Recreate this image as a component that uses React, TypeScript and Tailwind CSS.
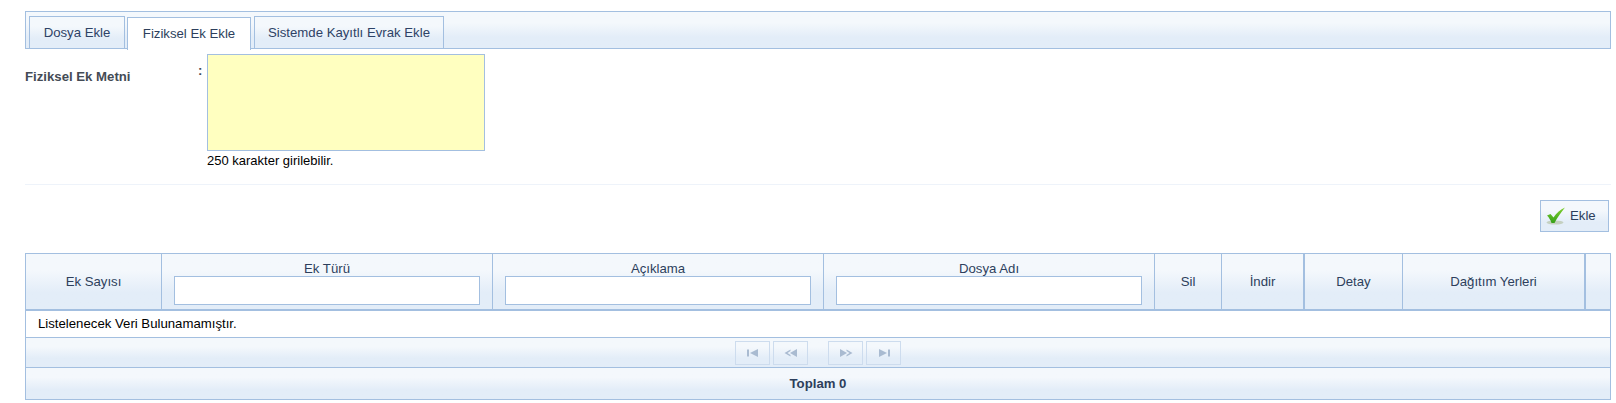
import React from "react";

const bar = "bg-gradient-to-b from-[#f4f8fc] from-30% to-[#e3edf8] to-70%";
const font = "font-['Liberation_Sans',Arial,sans-serif]";

function Tab({ label, active, className }: { label: string; active?: boolean; className: string }) {
    if (active) {
        return (
            <div className={`h-[33px] -mb-px mt-[5px] flex items-center justify-center border border-b-0 border-[#a3bfe0] bg-white text-[#2d3f5c] ${className}`}>
                {label}
            </div>
        );
    }
    return (
        <div className={`h-[32px] mt-[4px] flex items-center justify-center border border-b-0 border-[#a3bfe0] text-[#2d4266] ${className} ${bar}`}>
            {label}
        </div>
    );
}

function HeadCell({ label, filter, className }: { label: string; filter?: boolean; className: string }) {
    return (
        <div className={`flex flex-col items-center text-[#2d3f5c] ${filter ? "justify-end pb-[4px]" : "justify-center"} ${className}`}>
            {filter ? (
                <>
                    <div className="h-[17px] leading-[19px]">{label}</div>
                    <input className="w-[306px] h-[29px] border border-[#a3bfe0] bg-white" />
                </>
            ) : (
                label
            )}
        </div>
    );
}

function PagerBtn({ kind }: { kind: "first" | "prev" | "next" | "last" }) {
    return (
        <button className="w-[35px] h-[24px] border border-[#cddcee] flex items-center justify-center">
            <svg width="20" height="10" viewBox="0 0 20 10" fill="#a9bbd1">
                {kind === "first" && (
                    <>
                        <rect x="4" y="1.5" width="2" height="7" />
                        <path d="M15 1v8L7 5z" />
                    </>
                )}
                {kind === "prev" && (
                    <>
                        <path d="M9.500 1.500L3.500 5l6 3.500V7L6.500 5l3-2z" />
                        <path d="M16 1v8L9 5z" />
                    </>
                )}
                {kind === "next" && (
                    <>
                        <path d="M4 1v8L11 5z" />
                        <path d="M10.500 1.500l6 3.500-6 3.500V7l3-2-3-2z" />
                    </>
                )}
                {kind === "last" && (
                    <>
                        <path d="M5 1v8L13 5z" />
                        <rect x="14" y="1.5" width="2" height="7" />
                    </>
                )}
            </svg>
        </button>
    );
}

export default function App() {
    return (
        <div className={`w-[1616px] h-[403px] bg-white pt-[11px] pl-[25px] pr-[5px] text-[13.2px] overflow-hidden ${font}`}>
            {/* tabs */}
            <div className={`h-[38px] border border-[#a3bfe0] flex pl-[3px] ${bar}`}>
                <Tab label="Dosya Ekle" className="w-[96px]" />
                <Tab label="Fiziksel Ek Ekle" active className="w-[124px] ml-[2px]" />
                <Tab label="Sistemde Kayıtlı Evrak Ekle" className="w-[190px] ml-[3px]" />
            </div>

            {/* form */}
            <div className="flex mt-[5px]">
                <div className="w-[173px] pt-[14px] font-bold text-[#444b55] leading-[17px]">Fiziksel Ek Metni</div>
                <div className="w-[9px] pt-[8px] font-bold text-[#444b55] leading-[17px]">:</div>
                <div>
                    <div className="w-[278px] h-[97px] border border-[#a3bfe0] bg-[#ffffc0]" />
                    <div className="text-[13px] leading-[16px] mt-[2px] text-black">250 karakter girilebilir.</div>
                </div>
            </div>

            <div className="h-px bg-[#eef3fa] mt-[15px]" />

            <div className="flex justify-end pr-[2px] mt-[15px]">
                <button className={`w-[69px] h-[32px] border border-[#a3bfe0] flex items-center pl-[5px] gap-[4px] text-[#2d3f5c] ${bar}`}>
                    <svg width="20" height="18" viewBox="0 0 20 18">
                        <defs>
                            <linearGradient id="chk" x1="0" y1="0" x2="0" y2="1">
                                <stop offset="0" stopColor="#7fd02e" />
                                <stop offset="1" stopColor="#35a018" />
                            </linearGradient>
                        </defs>
                        <ellipse cx="9" cy="15.500" rx="8.500" ry="2" fill="#c4d0c0" />
                        <path d="M1 8.500l3.500-1.500 3 3.500C10.500 6 14.500 2.500 19 .5 15 5.500 11.500 10 8.500 16H5.500C4.500 13 3 10.500 1 8.500z" fill="url(#chk)" />
                    </svg>
                    Ekle
                </button>
            </div>

            {/* grid */}
            <div className="border border-[#a3bfe0] mt-[21px]">
                <div className={`h-[57px] flex border-b-2 border-[#a3bfe0] ${bar}`}>
                    <HeadCell label="Ek Sayısı" className="w-[136px] border-r border-[#a3bfe0]" />
                    <HeadCell label="Ek Türü" filter className="w-[331px] border-r border-[#a3bfe0]" />
                    <HeadCell label="Açıklama" filter className="w-[331px] border-r border-[#a3bfe0]" />
                    <HeadCell label="Dosya Adı" filter className="w-[331px] border-r border-[#a3bfe0]" />
                    <HeadCell label="Sil" className="w-[67px] border-r border-[#a3bfe0]" />
                    <HeadCell label="İndir" className="w-[83px] border-r-2 border-[#a3bfe0]" />
                    <HeadCell label="Detay" className="w-[98px] border-r border-[#a3bfe0]" />
                    <HeadCell label="Dağıtım Yerleri" className="w-[183px] border-r-2 border-[#a3bfe0]" />
                    <div className="flex-1" />
                </div>
                <div className="h-[27px] border-b border-[#a3bfe0] pl-[12px] flex items-center text-black">
                    Listelenecek Veri Bulunamamıştır.
                </div>
                <div className={`h-[30px] border-b border-[#a3bfe0] flex items-center pl-[709px] ${bar}`}>
                    <PagerBtn kind="first" />
                    <div className="w-[3px]" />
                    <PagerBtn kind="prev" />
                    <div className="w-[20px]" />
                    <PagerBtn kind="next" />
                    <div className="w-[3px]" />
                    <PagerBtn kind="last" />
                </div>
                <div className={`h-[31px] flex items-center justify-center font-bold text-[#2d3f5c] ${bar}`}>Toplam 0</div>
            </div>
        </div>
    );
}
